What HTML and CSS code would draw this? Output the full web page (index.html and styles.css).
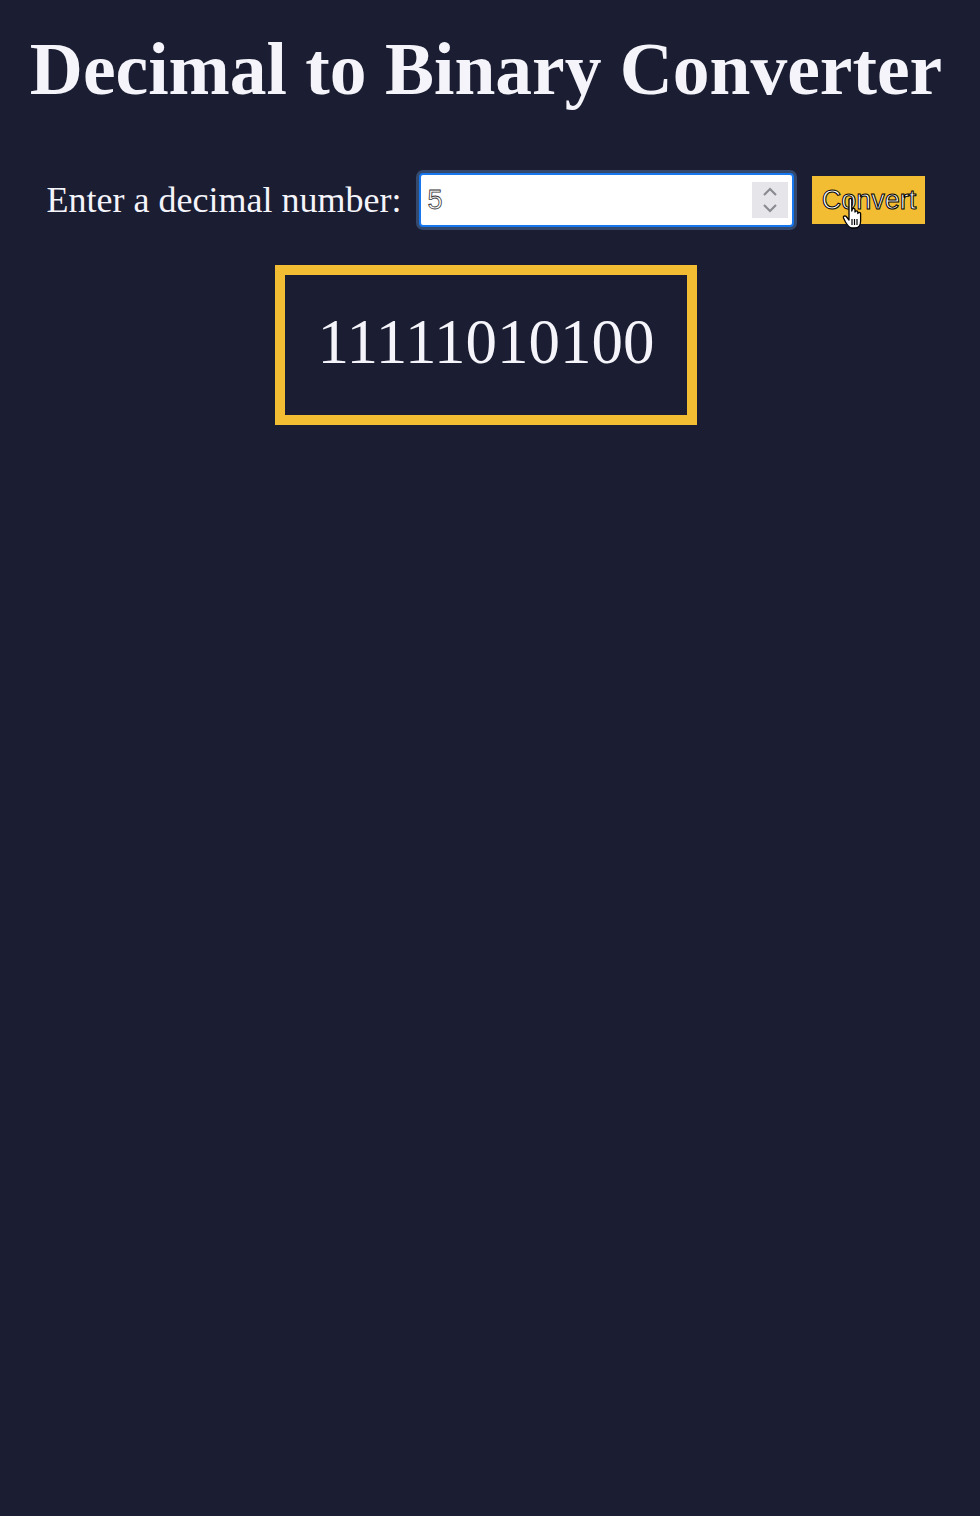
FILE: index.html
```html
<!DOCTYPE html>
<html lang="en">
<head>
<meta charset="utf-8">
<title>Decimal to Binary Converter</title>
<link rel="stylesheet" href="styles.css">
</head>
<body>
<main class="page">
  <h1 class="title">Decimal to Binary Converter</h1>
  <div class="form-row">
    <label class="label" for="num">Enter a decimal number:</label>
    <div class="field">
      <input class="field-input" id="num" type="text" value="5">
      <div class="spinner">
        <svg width="16" height="28" viewBox="0 0 16 28"><path d="M2 9 L8 3 L14 9" fill="none" stroke="#8a8a92" stroke-width="2.2"/><path d="M2 19 L8 25 L14 19" fill="none" stroke="#8a8a92" stroke-width="2.2"/></svg>
      </div>
    </div>
    <div class="btn-wrap">
      <button class="btn" type="button">Convert</button>
      <svg class="cursor" width="26" height="34" viewBox="0 0 26 34"><path d="M7 2.5 C7 1 9.8 1 9.8 2.5 L9.8 14 L10.2 12.5 C10.2 11 13 11 13 12.5 L13 15 C13 13.5 15.8 13.5 15.8 15 L15.8 16.5 C15.8 15 18.6 15 18.6 16.5 L18.6 24 C18.6 28 16.5 31 13 31 L10 31 C7 31 5.5 28.5 3.5 25 L1.5 21 C0.8 19.5 2.8 18 4.2 19.5 L7 23 Z" fill="#fff" stroke="#000" stroke-width="1.3" stroke-linejoin="round"/><path d="M10 22 L10 28 M12.5 22 L12.5 28 M15 22 L15 28" stroke="#000" stroke-width="1.2"/></svg>
    </div>
  </div>
  <div class="result">11111010100</div>
</main>
</body>
</html>
```

FILE: styles.css
```css
html, body {
  margin: 0;
  padding: 0;
  background: #1b1d32;
}
body {
  min-height: 1516px;
  color: #f4f4fa;
  font-family: "Liberation Serif", "Times New Roman", serif;
}
.page {
  display: flex;
  flex-direction: column;
  align-items: center;
  padding: 28px 0 0;
  margin-left: -8px;
}
.title {
  margin: 0;
  font-size: 73.5px;
  font-weight: bold;
  line-height: 84px;
}
.form-row {
  display: flex;
  align-items: center;
  gap: 18px;
  margin-top: 61px;
}
.label {
  font-size: 36px;
  line-height: 42px;
}
.field {
  display: flex;
  align-items: center;
  box-sizing: border-box;
  width: 375px;
  height: 54px;
  background: #fff;
  border: 2px solid #1677ee;
  border-radius: 4px;
  box-shadow: 0 0 0 3px #34496c;
  padding: 0 4px 0 6px;
}
.field-input {
  flex: 1;
  min-width: 0;
  border: 0;
  outline: none;
  background: transparent;
  font-family: "Liberation Sans", Arial, sans-serif;
  font-size: 27px;
  color: #fff;
  -webkit-text-stroke: 0.8px #333;
  padding: 0;
}
.spinner {
  width: 36px;
  height: 36px;
  background: #e6e6ea;
  display: flex;
  align-items: center;
  justify-content: center;
}
.btn-wrap {
  position: relative;
}
.btn {
  display: block;
  background: #f2bd32;
  border: 0;
  border-radius: 0;
  width: 113px;
  height: 48px;
  padding: 0;
  font-family: "Liberation Sans", Arial, sans-serif;
  font-size: 27px;
  color: #fff;
  -webkit-text-stroke: 1px #000;
}
.cursor {
  position: absolute;
  left: 30px;
  top: 21px;
}
.result {
  margin-top: 38px;
  box-sizing: border-box;
  width: 422px;
  height: 160px;
  border: 10px solid #f2bd32;
  display: flex;
  align-items: center;
  justify-content: center;
  font-size: 63px;
  padding-top: 0;
  padding-bottom: 6px;
}
```
